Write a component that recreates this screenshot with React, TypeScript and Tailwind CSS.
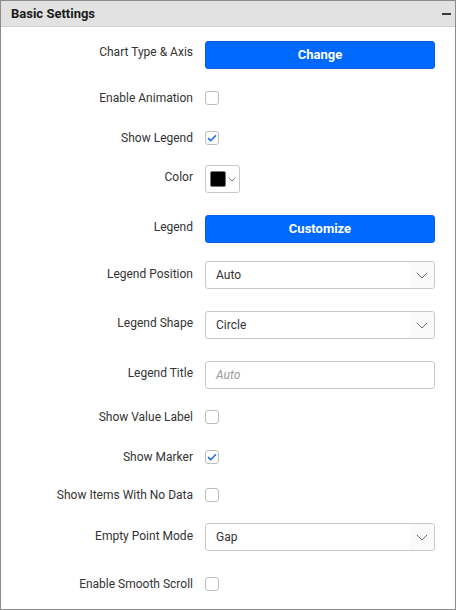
import React from "react";

const font = { fontFamily: "Roboto, 'Liberation Sans', sans-serif" };

function Chevron({ size = 12 }: { size?: number }) {
  return (
    <svg width={size} height={size / 2 + 1} viewBox="0 0 12 7" fill="none">
      <path d="M0.8 0.8 L6 6 L11.2 0.8" stroke="#6b6b6b" strokeWidth="1" />
    </svg>
  );
}

function Checkbox({ checked }: { checked?: boolean }) {
  return (
    <div className="w-[14px] h-[14px] rounded-[3px] border border-[#bdbdbd] bg-white flex items-center justify-center">
      {checked && (
        <svg width="10" height="8" viewBox="0 0 10 8" fill="none">
          <path d="M1 4.2 L3.7 6.7 L9 1.2" stroke="#1a6cf0" strokeWidth="1.6" />
        </svg>
      )}
    </div>
  );
}

function Button({ text }: { text: string }) {
  return (
    <div className="w-[230px] h-[28px] rounded-[3px] bg-[#0069ff] border border-[#0a5fe0] flex items-center justify-center text-white font-bold text-[13px]">
      {text}
    </div>
  );
}

function Select({ value }: { value: string }) {
  return (
    <div className="w-[230px] h-[28px] rounded-[3px] border border-[#c8c8c8] bg-white flex items-center overflow-hidden">
      <div className="flex-1 pl-[10px] text-[12px] text-[#333]">{value}</div>
      <div className="w-[24px] h-full bg-[#fafafa] flex items-center justify-center">
        <Chevron />
      </div>
    </div>
  );
}

function Input({ placeholder }: { placeholder: string }) {
  return (
    <div className="w-[230px] h-[28px] rounded-[3px] border border-[#c8c8c8] bg-white flex items-center pl-[10px] text-[12px] italic text-[#9a9a9a]">
      {placeholder}
    </div>
  );
}

function ColorPick() {
  return (
    <div className="w-[35px] h-[28px] rounded-[3px] border border-[#c8c8c8] bg-white flex items-center pl-[4px] gap-[2px]">
      <div className="w-[16px] h-[16px] rounded-[2px] bg-black border border-[#777]" />
      <svg width="8" height="5" viewBox="0 0 8 5" fill="none">
        <path d="M0.6 0.6 L4 4 L7.4 0.6" stroke="#6b6b6b" strokeWidth="0.9" />
      </svg>
    </div>
  );
}

function Row({
  label,
  mt,
  pt = "",
  kind,
  children,
}: {
  label: string;
  mt: string;
  pt?: string;
  kind: "check" | "ctrl";
  children: React.ReactNode;
}) {
  return (
    <div className={`flex ${mt} ${kind === "check" ? "items-center h-[14px]" : "items-start"}`}>
      <div className={`w-[192px] text-right text-[12px] leading-[14px] text-[#333] ${pt}`}>
        {label}
      </div>
      <div className="ml-[12px]">{children}</div>
    </div>
  );
}

export default function App() {
  return (
    <div style={font} className="w-[456px] h-[610px] bg-white border border-[#8c8c8c] flex flex-col">
      <div className="h-[26px] bg-[#e2e2e2] border-b border-[#cfcfcf] flex items-center justify-between pl-[10px] pr-[3px] shrink-0">
        <div className="font-bold text-[13px] text-[#1a1a1a]">Basic Settings</div>
        <div className="w-[9px] h-[2px] bg-[#3a3a3a] mr-[1px]" />
      </div>
      <div className="flex flex-col">
        <Row label="Chart Type & Axis" mt="mt-[14px]" pt="pt-[4px]" kind="ctrl">
          <Button text="Change" />
        </Row>
        <Row label="Enable Animation" mt="mt-[22px]" kind="check">
          <Checkbox />
        </Row>
        <Row label="Show Legend" mt="mt-[26px]" kind="check">
          <Checkbox checked />
        </Row>
        <Row label="Color" mt="mt-[20px]" pt="pt-[5px]" kind="ctrl">
          <ColorPick />
        </Row>
        <Row label="Legend" mt="mt-[22px]" pt="pt-[5px]" kind="ctrl">
          <Button text="Customize" />
        </Row>
        <Row label="Legend Position" mt="mt-[18px]" pt="pt-[6px]" kind="ctrl">
          <Select value="Auto" />
        </Row>
        <Row label="Legend Shape" mt="mt-[22px]" pt="pt-[5px]" kind="ctrl">
          <Select value="Circle" />
        </Row>
        <Row label="Legend Title" mt="mt-[22px]" pt="pt-[5px]" kind="ctrl">
          <Input placeholder="Auto" />
        </Row>
        <Row label="Show Value Label" mt="mt-[21px]" kind="check">
          <Checkbox />
        </Row>
        <Row label="Show Marker" mt="mt-[26px]" kind="check">
          <Checkbox checked />
        </Row>
        <Row label="Show Items With No Data" mt="mt-[24px]" kind="check">
          <Checkbox />
        </Row>
        <Row label="Empty Point Mode" mt="mt-[21px]" pt="pt-[6px]" kind="ctrl">
          <Select value="Gap" />
        </Row>
        <Row label="Enable Smooth Scroll" mt="mt-[26px]" kind="check">
          <Checkbox />
        </Row>
      </div>
    </div>
  );
}
